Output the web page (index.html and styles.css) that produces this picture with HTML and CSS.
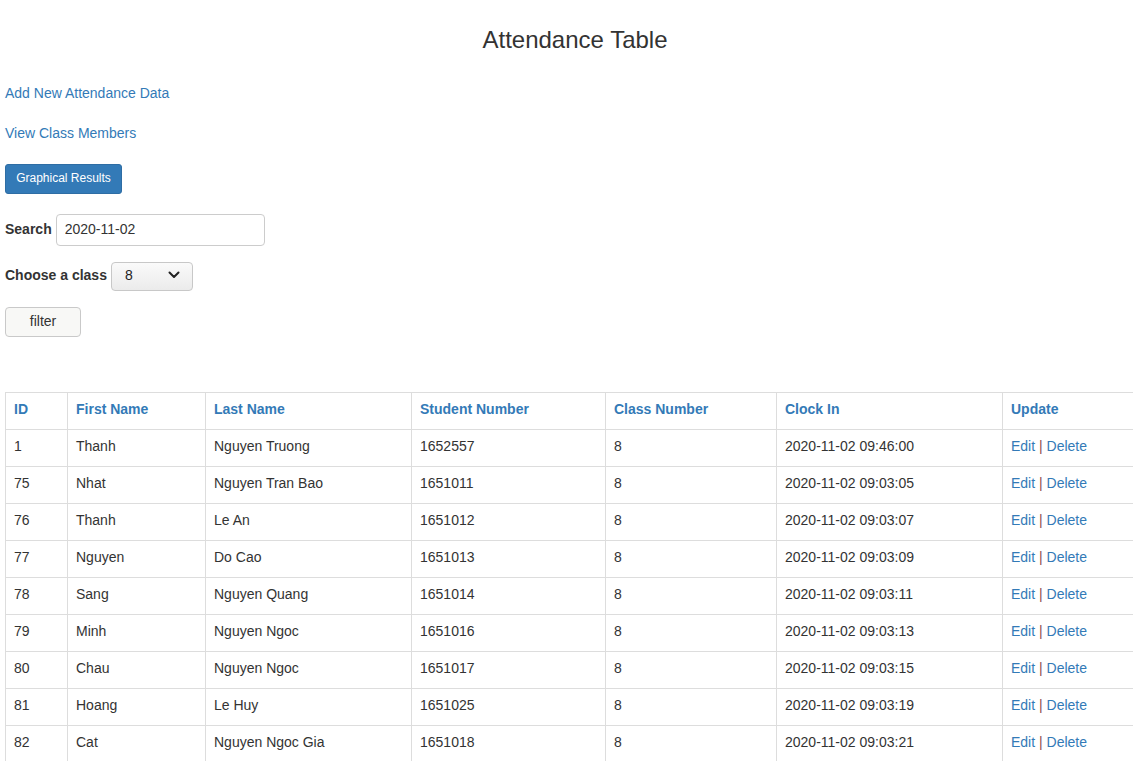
FILE: index.html
```html
<!DOCTYPE html>
<html>
<head>
<meta charset="utf-8">
<title>Attendance Table</title>
<link rel="stylesheet" href="styles.css">
</head>
<body>
<div class="page">
  <h3 class="title">Attendance Table</h3>
  <p class="link-line link-first"><a href="#">Add New Attendance Data</a></p>
  <p class="link-line link-second"><a href="#">View Class Members</a></p>
  <button class="btn-primary">Graphical Results</button>
  <form class="filters">
    <div class="field search-field">
      <label class="field-label">Search</label>
      <input class="search-input" type="text" value="2020-11-02">
    </div>
    <div class="field class-field">
      <label class="field-label">Choose a class</label>
      <div class="select-wrap">
        <span class="select-value">8</span>
        <svg class="chevron" width="12" height="8" viewBox="0 0 12 8"><path d="M1.5 1.5 L6 6 L10.5 1.5" fill="none" stroke="#222" stroke-width="2" stroke-linecap="round" stroke-linejoin="round"/></svg>
      </div>
    </div>
    <button type="button" class="btn-default">filter</button>
  </form>
  <table class="data-table">
    <colgroup>
      <col class="c-id"><col class="c-first"><col class="c-last"><col class="c-num"><col class="c-class"><col class="c-clock"><col class="c-update">
    </colgroup>
    <thead>
      <tr><th>ID</th><th>First Name</th><th>Last Name</th><th>Student Number</th><th>Class Number</th><th>Clock In</th><th>Update</th></tr>
    </thead>
    <tbody>
      <tr><td>1</td><td>Thanh</td><td>Nguyen Truong</td><td>1652557</td><td>8</td><td>2020-11-02 09:46:00</td><td><a href="#">Edit</a> <span class="sep">|</span> <a href="#">Delete</a></td></tr>
      <tr><td>75</td><td>Nhat</td><td>Nguyen Tran Bao</td><td>1651011</td><td>8</td><td>2020-11-02 09:03:05</td><td><a href="#">Edit</a> <span class="sep">|</span> <a href="#">Delete</a></td></tr>
      <tr><td>76</td><td>Thanh</td><td>Le An</td><td>1651012</td><td>8</td><td>2020-11-02 09:03:07</td><td><a href="#">Edit</a> <span class="sep">|</span> <a href="#">Delete</a></td></tr>
      <tr><td>77</td><td>Nguyen</td><td>Do Cao</td><td>1651013</td><td>8</td><td>2020-11-02 09:03:09</td><td><a href="#">Edit</a> <span class="sep">|</span> <a href="#">Delete</a></td></tr>
      <tr><td>78</td><td>Sang</td><td>Nguyen Quang</td><td>1651014</td><td>8</td><td>2020-11-02 09:03:11</td><td><a href="#">Edit</a> <span class="sep">|</span> <a href="#">Delete</a></td></tr>
      <tr><td>79</td><td>Minh</td><td>Nguyen Ngoc</td><td>1651016</td><td>8</td><td>2020-11-02 09:03:13</td><td><a href="#">Edit</a> <span class="sep">|</span> <a href="#">Delete</a></td></tr>
      <tr><td>80</td><td>Chau</td><td>Nguyen Ngoc</td><td>1651017</td><td>8</td><td>2020-11-02 09:03:15</td><td><a href="#">Edit</a> <span class="sep">|</span> <a href="#">Delete</a></td></tr>
      <tr><td>81</td><td>Hoang</td><td>Le Huy</td><td>1651025</td><td>8</td><td>2020-11-02 09:03:19</td><td><a href="#">Edit</a> <span class="sep">|</span> <a href="#">Delete</a></td></tr>
      <tr><td>82</td><td>Cat</td><td>Nguyen Ngoc Gia</td><td>1651018</td><td>8</td><td>2020-11-02 09:03:21</td><td><a href="#">Edit</a> <span class="sep">|</span> <a href="#">Delete</a></td></tr>
    </tbody>
  </table>
</div>
</body>
</html>
```

FILE: styles.css
```css
html, body {
  margin: 0;
  padding: 0;
  overflow: hidden;
  background: #fff;
}
body {
  font-family: "Liberation Sans", Arial, Helvetica, sans-serif;
  font-size: 14px;
  line-height: 20px;
  color: #333;
}
a {
  color: #337ab7;
  text-decoration: none;
}
.page {
  width: 1140px;
  padding: 0 5px;
}
.title {
  margin: 27px 0 0;
  font-size: 24px;
  line-height: 26px;
  font-weight: 500;
  text-align: center;
  color: #333;
}
.link-line {
  margin: 0;
  line-height: 20px;
}
.link-first {
  margin-top: 30px;
}
.link-second {
  margin-top: 20px;
}
.btn-primary {
  display: block;
  margin-top: 21px;
  box-sizing: border-box;
  height: 30px;
  width: 117px;
  padding: 0 0 2px;
  font-family: "Liberation Sans", Arial, sans-serif;
  font-size: 12px;
  line-height: 18px;
  color: #fff;
  background: #337ab7;
  border: 1px solid #2e6da4;
  border-radius: 3px;
}
.filters {
  margin: 20px 0 0;
  display: flex;
  flex-direction: column;
  align-items: flex-start;
}
.field {
  display: flex;
  align-items: baseline;
  gap: 4px;
}
.field-label {
  font-weight: bold;
}
.search-input {
  box-sizing: border-box;
  width: 209px;
  height: 32px;
  padding: 0 8px 3px;
  font-family: "Liberation Sans", Arial, sans-serif;
  font-size: 14px;
  color: #333;
  border: 1px solid #ccc;
  border-radius: 4px;
  background: #fff;
}
.class-field {
  margin-top: 16px;
}
.select-wrap {
  position: relative;
  box-sizing: border-box;
  width: 82px;
  height: 29px;
  padding: 2px 0 0 13px;
  line-height: 20px;
  border: 1px solid #c8c8c8;
  border-radius: 4px;
  background: linear-gradient(#fafafa, #ebebeb);
  color: #222;
}
.chevron {
  position: absolute;
  right: 12px;
  top: 8px;
}
.btn-default {
  margin-top: 16px;
  box-sizing: border-box;
  width: 76px;
  height: 30px;
  padding: 0 0 3px;
  font-family: "Liberation Sans", Arial, sans-serif;
  font-size: 14px;
  color: #333;
  background: #f8f8f6;
  border: 1px solid #c9c9c9;
  border-radius: 4px;
}
.data-table {
  margin-top: 55px;
  width: 1140px;
  table-layout: fixed;
  border-collapse: collapse;
  border-spacing: 0;
}
.c-id { width: 62px; }
.c-first { width: 138px; }
.c-last { width: 206px; }
.c-num { width: 194px; }
.c-class { width: 171px; }
.c-clock { width: 226px; }
.c-update { width: 143px; }
.data-table th,
.data-table td {
  padding: 6px 8px 10px;
  line-height: 20px;
  text-align: left;
  border: 1px solid #ddd;
  white-space: nowrap;
}
.data-table th {
  font-weight: bold;
  color: #337ab7;
}
.sep {
  color: #8b4c4c;
}
```
